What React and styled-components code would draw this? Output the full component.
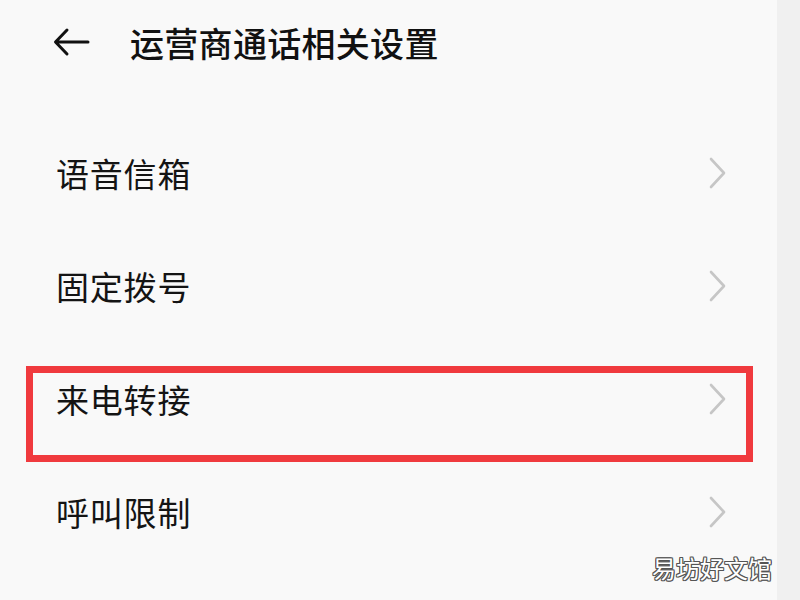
import React from "react";
import styled, { createGlobalStyle } from "styled-components";

const GlobalStyle = createGlobalStyle`
  html, body {
    margin: 0;
    padding: 0;
    background: #f8f8f8;
  }
  body {
    font-family: "Noto Sans CJK SC", "Noto Sans", sans-serif;
  }
`;

const Page = styled.div`
  position: relative;
  display: flex;
  width: 800px;
  height: 600px;
  overflow: hidden;
`;

const Main = styled.div`
  width: 777px;
  background: #f9f9f9;
  display: flex;
  flex-direction: column;
`;

const Strip = styled.div`
  flex: 1;
  background: #f0f0f0;
`;

const Header = styled.header`
  height: 84px;
  display: flex;
  align-items: center;
  padding-left: 52px;
  gap: 38px;
`;

const BackButton = styled.span`
  display: flex;
  align-items: center;
  width: 40px;
  height: 40px;
  color: #111;
`;

const Title = styled.h1`
  margin: 0;
  font-size: 34px;
  font-weight: 500;
  color: #111;
  letter-spacing: 0.3px;
`;

const List = styled.ul`
  list-style: none;
  margin: 0;
  padding: 32px 0 0 0;
`;

const Row = styled.li`
  position: relative;
  height: 113px;
  display: flex;
  align-items: center;
  justify-content: space-between;
  padding: 0 50px 0 56px;
`;

const Label = styled.span`
  font-size: 33px;
  color: #141414;
  letter-spacing: 0.8px;
`;

const Highlight = styled.div`
  position: absolute;
  left: 26px;
  top: 24px;
  width: 727px;
  height: 96px;
  box-sizing: border-box;
  border: 7px solid #f03a3e;
  pointer-events: none;
`;

const Watermark = styled.div`
  position: absolute;
  left: 652px;
  top: 550px;
  font-size: 24px;
  color: #fff;
  text-shadow:
    1px 0 0 #555, -1px 0 0 #555, 0 1px 0 #555, 0 -1px 0 #555,
    1px 1px 0 #555, -1px -1px 0 #555, 1px -1px 0 #555, -1px 1px 0 #555;
`;

const Chevron = () => (
  <svg width="20" height="34" viewBox="0 0 20 34">
    <path d="M4 3 L17 17 L4 31" fill="none" stroke="#c6c6c6" strokeWidth="2.6" strokeLinecap="round" strokeLinejoin="round" />
  </svg>
);

const items = [
  { label: "语音信箱" },
  { label: "固定拨号" },
  { label: "来电转接", marked: true },
  { label: "呼叫限制" },
];

const App = () => (
  <>
    <GlobalStyle />
    <Page>
      <Main>
        <Header>
          <BackButton>
            <svg width="40" height="40" viewBox="0 0 40 40">
              <path d="M36 20 H4 M15 8 L3.5 20 L15 32" fill="none" stroke="#111" strokeWidth="3" strokeLinecap="round" strokeLinejoin="round" />
            </svg>
          </BackButton>
          <Title>运营商通话相关设置</Title>
        </Header>
        <List>
          {items.map((it) => (
            <Row key={it.label}>
              <Label>{it.label}</Label>
              <Chevron />
              {it.marked && <Highlight />}
            </Row>
          ))}
        </List>
      </Main>
      <Strip />
      <Watermark>易坊好文馆</Watermark>
    </Page>
  </>
);

export default App;
